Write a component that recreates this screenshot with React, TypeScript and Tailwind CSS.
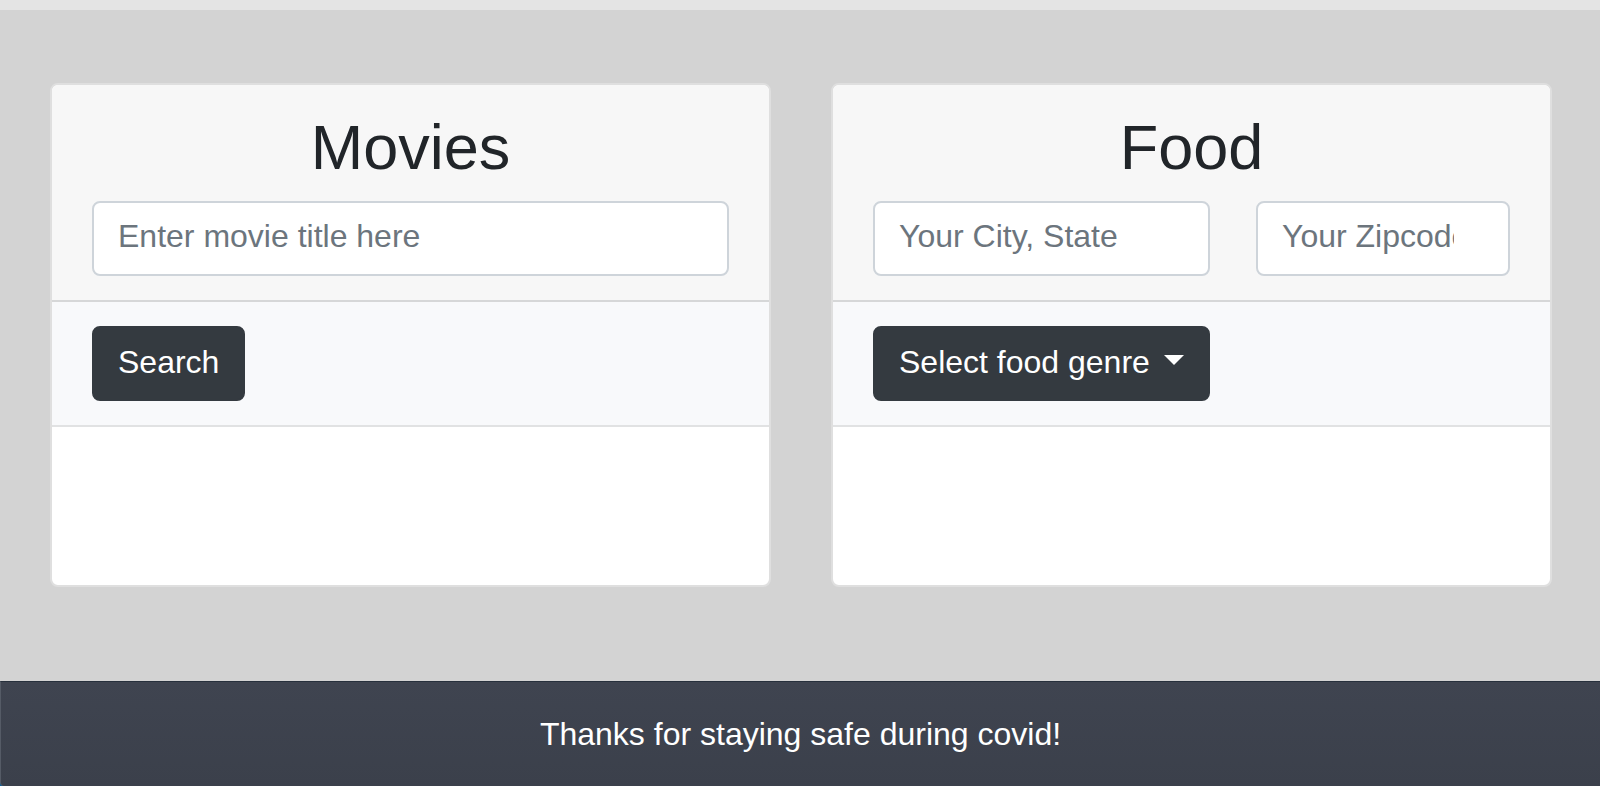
import type { InputHTMLAttributes, ReactNode } from "react";

function TextField({ label, className = "", ...rest }: { label: string } & InputHTMLAttributes<HTMLInputElement>) {
  return (
    <input
      type="text"
      aria-label={label}
      placeholder={label}
      className={`h-[75px] w-full min-w-0 rounded-lg border-2 border-[#ced4da] bg-white pb-1 pl-6 text-[32px] text-[#495057] placeholder:text-[#6c757d] ${className}`}
      {...rest}
    />
  );
}

function DarkButton({ children }: { children: ReactNode }) {
  return (
    <button
      type="button"
      className="flex h-[75px] items-center gap-[14px] rounded-lg border-2 border-[#343a40] bg-[#343a40] px-6 pb-1 text-[32px] leading-[48px] text-white"
    >
      {children}
    </button>
  );
}

function Card({ title, fields, action }: { title: string; fields: ReactNode; action: ReactNode }) {
  return (
    <section className="flex min-w-0 flex-1 flex-col overflow-hidden rounded-lg border-2 border-[#dfdfdf] bg-white">
      <div className="border-b-2 border-[#d6d7d8] bg-[#f7f7f7] px-10 pt-6 pb-6">
        <h1 className="mb-4 text-center text-[63px] leading-[76px] text-[#212529]">{title}</h1>
        {fields}
      </div>
      <div className="flex border-b-2 border-[#e1e2e3] bg-[#f8f9fb] px-10 py-6">{action}</div>
      <div className="h-[158px]" />
    </section>
  );
}

export default function App() {
  return (
    <div className="flex min-h-screen flex-col bg-[#d3d3d3] font-['Liberation_Sans',Arial,sans-serif]">
      <div className="h-[10px] bg-[#e4e4e4]" />
      <main className="flex flex-1 items-start gap-[60px] pt-[73px] pr-12 pb-[92px] pl-[50px]">
        <Card
          title="Movies"
          fields={<TextField label="Enter movie title here" className="pr-6" />}
          action={<DarkButton>Search</DarkButton>}
        />
        <Card
          title="Food"
          fields={
            <div className="grid grid-cols-[337fr_254fr] gap-[46px]">
              <TextField label="Your City, State" className="pr-6" />
              <TextField label="Your Zipcode" className="pr-[54px]" inputMode="numeric" />
            </div>
          }
          action={
            <DarkButton>
              Select food genre
              <svg width="20" height="10" viewBox="0 0 20 10" className="mb-1" aria-hidden="true">
                <path d="M0 0h20L10 10z" fill="currentColor" />
              </svg>
            </DarkButton>
          }
        />
      </main>
      <div className="bg-[#0f5f96]">
        <footer className="flex h-[105px] items-center justify-center rounded-bl-[4px] border-t border-l border-t-[#27303c] border-l-[#555b66] bg-linear-to-b from-[#3f4450] to-[#3b404b] text-[32px] leading-[48px] text-white">
          <p>Thanks for staying safe during covid!</p>
        </footer>
      </div>
    </div>
  );
}
